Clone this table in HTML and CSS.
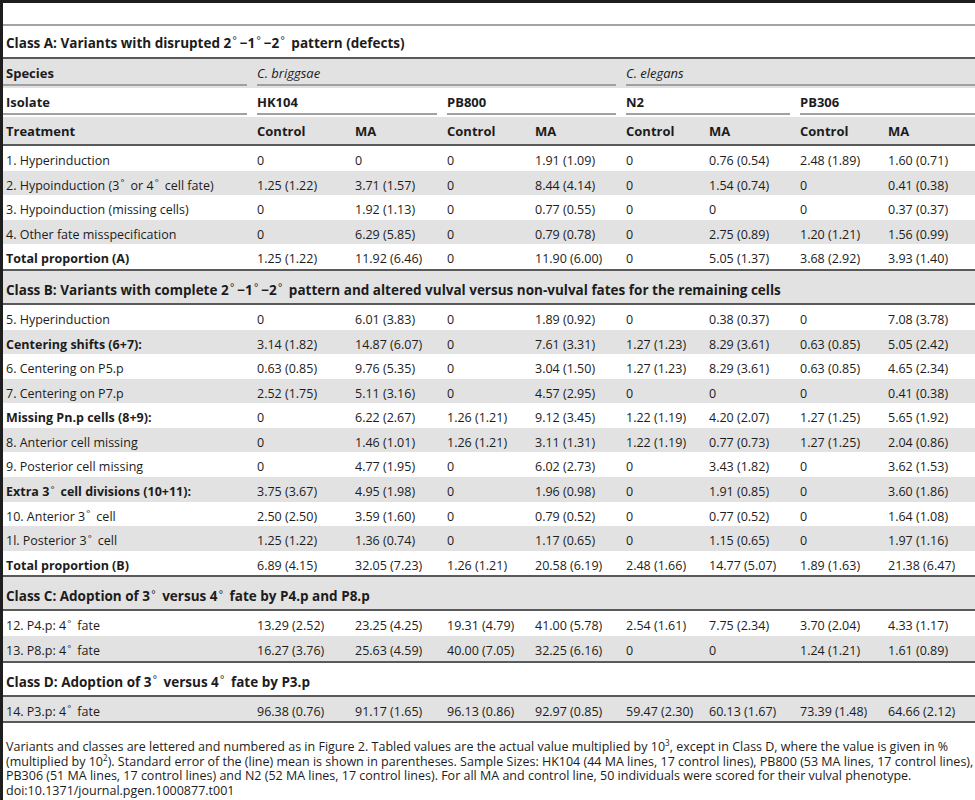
FILE: index.html
```html
<!DOCTYPE html>
<html lang="en">
<head>
    <meta charset="UTF-8">
    <title>Table 1 - Vulval variants</title>
    <link rel="stylesheet" href="styles.css">
</head>
<body>

<div class="frame">
    <div class="top-rule"></div>

    <table class="data">
        <colgroup>
            <col style="width: 244px">
            <col style="width: 98px">
            <col style="width: 92px">
            <col style="width: 88px">
            <col style="width: 91px">
            <col style="width: 83px">
            <col style="width: 91px">
            <col style="width: 88px">
            <col style="width: 97px">
        </colgroup>
        <tbody>
            <tr class="class-row">
                <td colspan="9">Class A: Variants with disrupted 2<span class="deg">°</span>−1<span class="deg">°</span>−2<span class="deg">°</span> pattern (defects)</td>
            </tr>
            <tr class="grp">
                <th class="lbl">Species</th>
                <th colspan="4" class="sp"><i>C. briggsae</i></th>
                <th colspan="4" class="sp"><i>C. elegans</i></th>
            </tr>
            <tr class="grp">
                <th class="lbl">Isolate</th>
                <th colspan="2">HK104</th>
                <th colspan="2">PB800</th>
                <th colspan="2">N2</th>
                <th colspan="2">PB306</th>
            </tr>
            <tr class="head end">
                <th class="lbl">Treatment</th>
                <th>Control</th><th>MA</th>
                <th>Control</th><th>MA</th>
                <th>Control</th><th>MA</th>
                <th>Control</th><th>MA</th>
            </tr>

            <tr><td>1. Hyperinduction</td><td>0</td><td>0</td><td>0</td><td>1.91 (1.09)</td><td>0</td><td>0.76 (0.54)</td><td>2.48 (1.89)</td><td>1.60 (0.71)</td></tr>
            <tr><td>2. Hypoinduction (3<span class="deg">°</span> or 4<span class="deg">°</span> cell fate)</td><td>1.25 (1.22)</td><td>3.71 (1.57)</td><td>0</td><td>8.44 (4.14)</td><td>0</td><td>1.54 (0.74)</td><td>0</td><td>0.41 (0.38)</td></tr>
            <tr><td>3. Hypoinduction (missing cells)</td><td>0</td><td>1.92 (1.13)</td><td>0</td><td>0.77 (0.55)</td><td>0</td><td>0</td><td>0</td><td>0.37 (0.37)</td></tr>
            <tr><td>4. Other fate misspecification</td><td>0</td><td>6.29 (5.85)</td><td>0</td><td>0.79 (0.78)</td><td>0</td><td>2.75 (0.89)</td><td>1.20 (1.21)</td><td>1.56 (0.99)</td></tr>
            <tr class="end"><td><b>Total proportion (A)</b></td><td>1.25 (1.22)</td><td>11.92 (6.46)</td><td>0</td><td>11.90 (6.00)</td><td>0</td><td>5.05 (1.37)</td><td>3.68 (2.92)</td><td>3.93 (1.40)</td></tr>

            <tr class="class-row end">
                <td colspan="9">Class B: Variants with complete 2<span class="deg">°</span>−1<span class="deg">°</span>−2<span class="deg">°</span> pattern and altered vulval versus non-vulval fates for the remaining cells</td>
            </tr>
            <tr><td>5. Hyperinduction</td><td>0</td><td>6.01 (3.83)</td><td>0</td><td>1.89 (0.92)</td><td>0</td><td>0.38 (0.37)</td><td>0</td><td>7.08 (3.78)</td></tr>
            <tr><td><b>Centering shifts (6+7):</b></td><td>3.14 (1.82)</td><td>14.87 (6.07)</td><td>0</td><td>7.61 (3.31)</td><td>1.27 (1.23)</td><td>8.29 (3.61)</td><td>0.63 (0.85)</td><td>5.05 (2.42)</td></tr>
            <tr><td>6. Centering on P5.p</td><td>0.63 (0.85)</td><td>9.76 (5.35)</td><td>0</td><td>3.04 (1.50)</td><td>1.27 (1.23)</td><td>8.29 (3.61)</td><td>0.63 (0.85)</td><td>4.65 (2.34)</td></tr>
            <tr><td>7. Centering on P7.p</td><td>2.52 (1.75)</td><td>5.11 (3.16)</td><td>0</td><td>4.57 (2.95)</td><td>0</td><td>0</td><td>0</td><td>0.41 (0.38)</td></tr>
            <tr><td><b>Missing Pn.p cells (8+9):</b></td><td>0</td><td>6.22 (2.67)</td><td>1.26 (1.21)</td><td>9.12 (3.45)</td><td>1.22 (1.19)</td><td>4.20 (2.07)</td><td>1.27 (1.25)</td><td>5.65 (1.92)</td></tr>
            <tr><td>8. Anterior cell missing</td><td>0</td><td>1.46 (1.01)</td><td>1.26 (1.21)</td><td>3.11 (1.31)</td><td>1.22 (1.19)</td><td>0.77 (0.73)</td><td>1.27 (1.25)</td><td>2.04 (0.86)</td></tr>
            <tr><td>9. Posterior cell missing</td><td>0</td><td>4.77 (1.95)</td><td>0</td><td>6.02 (2.73)</td><td>0</td><td>3.43 (1.82)</td><td>0</td><td>3.62 (1.53)</td></tr>
            <tr><td><b>Extra 3<span class="deg">°</span> cell divisions (10+11):</b></td><td>3.75 (3.67)</td><td>4.95 (1.98)</td><td>0</td><td>1.96 (0.98)</td><td>0</td><td>1.91 (0.85)</td><td>0</td><td>3.60 (1.86)</td></tr>
            <tr><td>10. Anterior 3<span class="deg">°</span> cell</td><td>2.50 (2.50)</td><td>3.59 (1.60)</td><td>0</td><td>0.79 (0.52)</td><td>0</td><td>0.77 (0.52)</td><td>0</td><td>1.64 (1.08)</td></tr>
            <tr><td>1l. Posterior 3<span class="deg">°</span> cell</td><td>1.25 (1.22)</td><td>1.36 (0.74)</td><td>0</td><td>1.17 (0.65)</td><td>0</td><td>1.15 (0.65)</td><td>0</td><td>1.97 (1.16)</td></tr>
            <tr class="end"><td><b>Total proportion (B)</b></td><td>6.89 (4.15)</td><td>32.05 (7.23)</td><td>1.26 (1.21)</td><td>20.58 (6.19)</td><td>2.48 (1.66)</td><td>14.77 (5.07)</td><td>1.89 (1.63)</td><td>21.38 (6.47)</td></tr>

            <tr class="class-row end">
                <td colspan="9">Class C: Adoption of 3<span class="deg">°</span> versus 4<span class="deg">°</span> fate by P4.p and P8.p</td>
            </tr>
            <tr><td>12. P4.p: 4<span class="deg">°</span> fate</td><td>13.29 (2.52)</td><td>23.25 (4.25)</td><td>19.31 (4.79)</td><td>41.00 (5.78)</td><td>2.54 (1.61)</td><td>7.75 (2.34)</td><td>3.70 (2.04)</td><td>4.33 (1.17)</td></tr>
            <tr class="end"><td>13. P8.p: 4<span class="deg">°</span> fate</td><td>16.27 (3.76)</td><td>25.63 (4.59)</td><td>40.00 (7.05)</td><td>32.25 (6.16)</td><td>0</td><td>0</td><td>1.24 (1.21)</td><td>1.61 (0.89)</td></tr>

            <tr class="class-row end">
                <td colspan="9">Class D: Adoption of 3<span class="deg">°</span> versus 4<span class="deg">°</span> fate by P3.p</td>
            </tr>
            <tr class="end"><td>14. P3.p: 4<span class="deg">°</span> fate</td><td>96.38 (0.76)</td><td>91.17 (1.65)</td><td>96.13 (0.86)</td><td>92.97 (0.85)</td><td>59.47 (2.30)</td><td>60.13 (1.67)</td><td>73.39 (1.48)</td><td>64.66 (2.12)</td></tr>
        </tbody>
    </table>

    <div class="notes">
        <p>Variants and classes are lettered and numbered as in Figure 2. Tabled values are the actual value multiplied by 10<sup>3</sup>, except in Class D, where the value is given in % (multiplied by 10<sup>2</sup>). Standard error of the (line) mean is shown in parentheses. Sample Sizes: HK104 (44 MA lines, 17 control lines), PB800 (53 MA lines, 17 control lines), PB306 (51 MA lines, 17 control lines) and N2 (52 MA lines, 17 control lines). For all MA and control line, 50 individuals were scored for their vulval phenotype.</p>
        <p>doi:10.1371/journal.pgen.1000877.t001</p>
    </div>
</div>

</body>
</html>
```

FILE: styles.css
```css
body {
    margin: 0;
    padding: 0;
    background-color: #ffffff;
    font-family: "Open Sans", "Liberation Sans", sans-serif;
    color: #1c1c1c;
}

/* dark edge of the page on top and left */
.frame {
    border-top: 3px solid #1e1e1e;
    border-left: 3px solid #1e1e1e;
    min-height: 797px;
}

.top-rule {
    height: 21px;
    border-bottom: 2px solid #a4a4a4;
}

.data {
    width: 100%;
    border-collapse: separate;
    border-spacing: 0;
    table-layout: fixed;
    font-size: 12.5px;
}

.data tbody tr:nth-child(even) {
    background-color: #e2e2e2;
}

.data td, .data th {
    padding: 7px 0 2.6px 10px;
    line-height: 15px;
    text-align: left;
    white-space: nowrap;
    vertical-align: middle;
}

.data td:first-child, .data th.lbl {
    padding-left: 3px;
}

.data th {
    padding-top: 6.8px;
    padding-bottom: 5.2px;
    font-size: 13px;
    font-weight: bold;
    border-bottom: 2px solid transparent;
}

.data th i {
    font-weight: normal;
}

/* underline of each column group, with a small gap before it */
.grp th {
    background-image: linear-gradient(#a0a0a0, #a0a0a0);
    background-repeat: no-repeat;
    background-position: right bottom;
    background-size: calc(100% - 10px) 2px;
}

.grp th.lbl {
    background-size: 100% 2px;
}

.class-row td {
    padding-top: 11px;
    padding-bottom: 5px;
    font-size: 13.5px;
    font-weight: bold;
    line-height: 16px;
}

.class-row:first-child td {
    padding-top: 9px;
    padding-bottom: 6px;
}

.end td, .end th,
.class-row td {
    border-bottom: 2px solid #5a5a5a;
}

.deg {
    font-size: 0.75em;
    line-height: 0;
    vertical-align: 0.35em;
    margin: 0 0.3em 0 0.12em;
    font-weight: normal;
}

.notes {
    padding: 17px 0 0 3px;
    font-size: 12.5px;
    line-height: 14.5px;
}

.notes p {
    margin: 0;
}

.notes sup {
    font-size: 0.65em;
    line-height: 0;
}
```
